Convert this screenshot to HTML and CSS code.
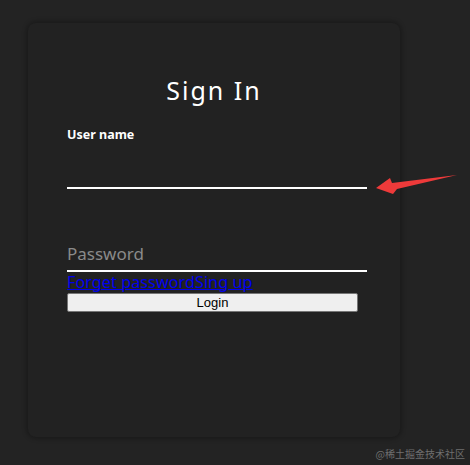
FILE: index.html
```html
<!DOCTYPE html>
<html>
<head>
<meta charset="utf-8">
<link rel="stylesheet" href="styles.css">
</head>
<body>
<div class="page">
  <div class="card">
    <h2 class="title">Sign In</h2>
    <form class="form">
      <label class="label">User name</label>
      <input class="field" type="text">
      <input class="field pw" type="password" placeholder="Password">
      <div class="links"><a href="#">Forget password</a><a href="#">Sing up</a></div>
      <button class="btn" type="button">Login</button>
    </form>
  </div>
</div>
<svg class="arrow" width="90" height="30" viewBox="370 170 90 30"><polygon points="376,188 390,178 392,183 457,175 397,189 393,194" fill="#ee3a3a"/></svg>
<div class="mark">@稀土掘金技术社区</div>
</body>
</html>
```
FILE: styles.css
```css
html, body {
  margin: 0;
  background: #232323;
  height: 100%;
}
body {
  position: relative;
  font-family: "Noto Sans", "Open Sans", sans-serif;
  overflow: hidden;
}
.page {
  padding: 23px 0 0 28px;
}
.card {
  width: 372px;
  height: 414px;
  box-sizing: border-box;
  background: #222222;
  border-radius: 8px;
  box-shadow: 0 0 4px 2px rgba(0,0,0,0.25);
  padding: 0 0 0 39px;
}
.title {
  margin: 0;
  padding-top: 49px;
  padding-right: 39px;
  text-align: center;
  color: #fff;
  font-weight: 400;
  font-size: 25px;
  letter-spacing: 2px;
  line-height: 36px;
}
.form {
  display: flex;
  flex-direction: column;
  align-items: flex-start;
}
.label {
  margin-top: 18px;
  color: #fff;
  font-size: 12.5px;
  font-weight: 700;
  line-height: 18px;
}
.field {
  width: 300px;
  box-sizing: border-box;
  background: transparent;
  border: none;
  border-bottom: 2px solid #fff;
  outline: none;
  color: #fff;
  font-family: inherit;
  font-size: 17px;
  padding: 0;
  height: 45px;
  margin-top: 0;
}
.field.pw {
  margin-top: 47px;
  height: 36px;
}
.field::placeholder {
  color: #8a8a8a;
}
.links {
  font-size: 16.3px;
  line-height: 21px;
}
.links a {
  color: #0000ee;
  text-decoration: underline;
  text-decoration-thickness: 1px;
}
.btn {
  width: 291px;
  height: 19px;
  margin-top: 0;
  padding: 0;
  background: #efefef;
  border: 1px solid #767676;
  border-radius: 2px;
  font-family: "Liberation Sans", Arial, sans-serif;
  font-size: 13px;
  color: #000;
}
.arrow {
  position: absolute;
  left: 370px;
  top: 170px;
}
.mark {
  position: absolute;
  right: 5px;
  top: 447px;
  font-family: "Noto Sans CJK SC", sans-serif;
  font-size: 10px;
  line-height: 14px;
  color: #6f6f6f;
}
```
